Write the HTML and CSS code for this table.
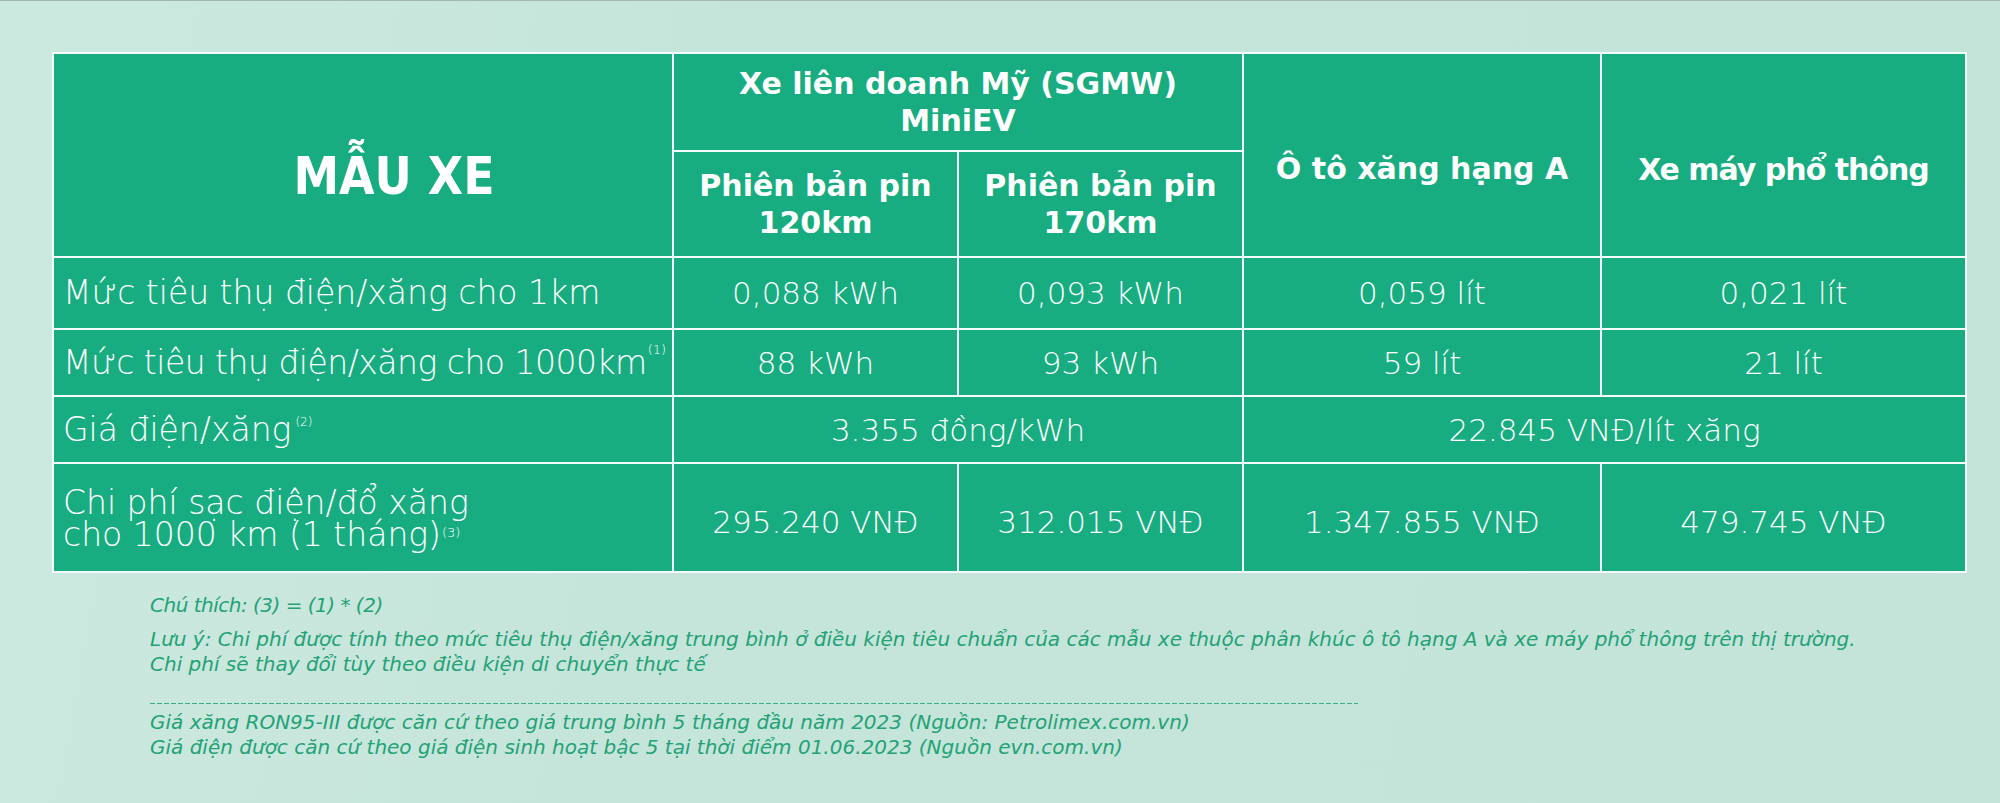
FILE: index.html
```
<!DOCTYPE html>
<html lang="vi">
<head>
<meta charset="utf-8">
<title>So sánh chi phí</title>
<link rel="stylesheet" href="styles.css">
</head>
<body>
<main class="page">
  <div class="table">
    <div class="cell head title">MẪU XE</div>
    <div class="cell head group">Xe liên doanh Mỹ (SGMW)<br>MiniEV</div>
    <div class="cell head side car">Ô tô xăng hạng A</div>
    <div class="cell head side bike">Xe máy phổ thông</div>
    <div class="cell head sub1">Phiên bản pin<br>120km</div>
    <div class="cell head sub2">Phiên bản pin<br>170km</div>

    <div class="cell label"><span class="txt">Mức tiêu thụ điện/xăng cho 1km</span></div>
    <div class="cell val">0,088 kWh</div>
    <div class="cell val">0,093 kWh</div>
    <div class="cell val">0,059 lít</div>
    <div class="cell val">0,021 lít</div>

    <div class="cell label tight"><span class="txt">Mức tiêu thụ điện/xăng cho 1000km<sup class="note n1">(1)</sup></span></div>
    <div class="cell val">88 kWh</div>
    <div class="cell val">93 kWh</div>
    <div class="cell val">59 lít</div>
    <div class="cell val">21 lít</div>

    <div class="cell label"><span class="txt">Giá điện/xăng<sup class="note n2">(2)</sup></span></div>
    <div class="cell val span2">3.355 đồng/kWh</div>
    <div class="cell val span2">22.845 VNĐ/lít xăng</div>

    <div class="cell label multi"><span class="txt">Chi phí sạc điện/đổ xăng<br>cho 1000 km (1 tháng)<sup class="note n3">(3)</sup></span></div>
    <div class="cell val low">295.240 VNĐ</div>
    <div class="cell val low">312.015 VNĐ</div>
    <div class="cell val low">1.347.855 VNĐ</div>
    <div class="cell val low">479.745 VNĐ</div>
  </div>

  <section class="notes">
    <p class="line first">Chú thích: (3) = (1) * (2)</p>
    <p class="line para">Lưu ý: Chi phí được tính theo mức tiêu thụ điện/xăng trung bình ở điều kiện tiêu chuẩn của các mẫu xe thuộc phân khúc ô tô hạng A và xe máy phổ thông trên thị trường.<br>Chi phí sẽ thay đổi tùy theo điều kiện di chuyển thực tế</p>
    <div class="dash"></div>
    <p class="line src">Giá xăng RON95-III được căn cứ theo giá trung bình 5 tháng đầu năm 2023 (Nguồn: Petrolimex.com.vn)<br>Giá điện được căn cứ theo giá điện sinh hoạt bậc 5 tại thời điểm 01.06.2023 (Nguồn evn.com.vn)</p>
  </section>
</main>
</body>
</html>
```
FILE: styles.css
```
html, body {
  margin: 0;
  padding: 0;
}
body {
  width: 2000px;
  height: 803px;
  overflow: hidden;
  border-top: 1px solid #a3b6af;
  box-sizing: border-box;
  background: linear-gradient(100deg, #cce9df 0%, #c6e5da 35%, #c4e4d9 100%);
  font-family: "DejaVu Sans", sans-serif;
}
.page {
  padding: 51px 0 0 52px;
}
.table {
  display: grid;
  grid-template-columns: 618px 283px 283px 356px 363px;
  grid-template-rows: 96px 104px 70px 65px 65px 107px;
  gap: 2px;
  padding: 2px;
  width: max-content;
  background: #f4fbf8;
}
.cell {
  background: #18ad80;
  color: #ffffff;
  display: flex;
  align-items: center;
  justify-content: center;
  text-align: center;
  white-space: nowrap;
  box-sizing: border-box;
  min-width: 0;
  min-height: 0;
}
.head {
  font-family: "DejaVu Sans", sans-serif;
  font-weight: 700;
  font-size: 30px;
  line-height: 37px;
}
.title {
  grid-area: 1 / 1 / 3 / 2;
  font-family: "DejaVu Sans Condensed", "DejaVu Sans", sans-serif;
  font-stretch: condensed;
  font-size: 51px;
  line-height: 60px;
  padding: 44px 0 0 62px;
}
.group {
  grid-area: 1 / 2 / 2 / 4;
}
.car {
  grid-area: 1 / 4 / 3 / 5;
  padding-top: 26px;
}
.bike {
  grid-area: 1 / 5 / 3 / 6;
  padding-top: 28px;
  letter-spacing: -1px;
}
.sub1 {
  grid-area: 2 / 2 / 3 / 3;
}
.sub2 {
  grid-area: 2 / 3 / 3 / 4;
}
.label {
  justify-content: flex-start;
  text-align: left;
  padding-left: 9px;
  font-weight: 200;
  font-size: 33px;
  line-height: 32px;
}
.tight {
  letter-spacing: -0.5px;
}
.multi {
  padding-top: 3px;
}
.val {
  font-weight: 200;
  font-size: 31px;
}
.low {
  padding-top: 8px;
}
.span2 {
  grid-column: span 2;
}
.note {
  font-size: 13px;
  line-height: 0;
  letter-spacing: 0;
}
.n1 {
  vertical-align: 20px;
  margin-left: 1px;
}
.n2 {
  font-size: 12px;
  vertical-align: 15px;
  margin-left: 4px;
}
.n3 {
  vertical-align: 9px;
  margin-left: 1px;
}
.notes {
  padding-left: 98px;
  color: #22a276;
  font-family: "DejaVu Sans", sans-serif;
  font-style: italic;
  font-weight: 200;
  font-size: 20px;
  line-height: 25px;
}
.line {
  margin: 0;
  white-space: nowrap;
}
.first {
  margin-top: 20px;
  letter-spacing: -0.5px;
}
.para {
  margin-top: 9px;
}
.dash {
  width: 1208px;
  height: 1px;
  margin-top: 26px;
  background: repeating-linear-gradient(90deg, #3aae86 0 5px, transparent 5px 7px);
}
.src {
  margin-top: 6px;
}
```
